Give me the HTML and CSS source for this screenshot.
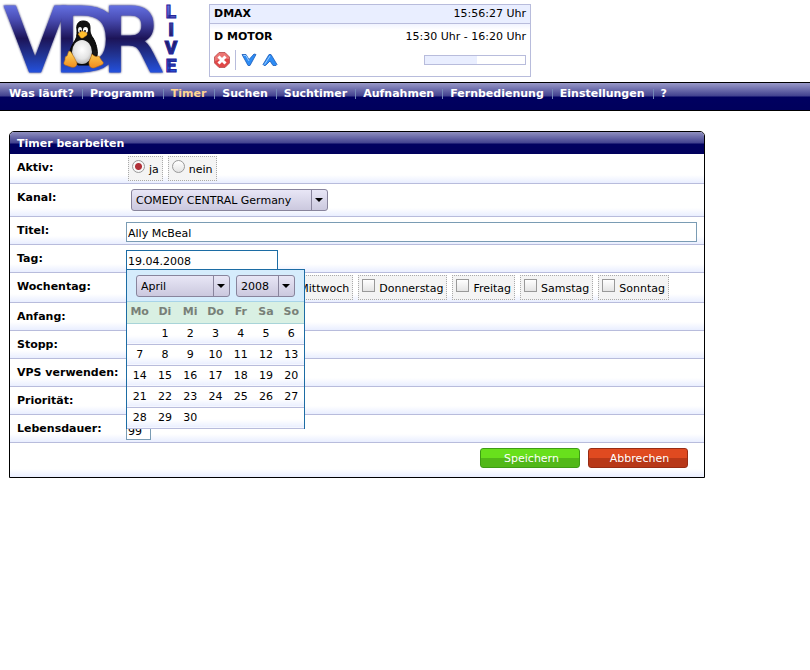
FILE: index.html
```html
<!DOCTYPE html>
<html lang="de">
<head>
<meta charset="utf-8">
<title>VDR Live - Timer bearbeiten</title>
<link rel="stylesheet" href="styles.css">
</head>
<body>
<header class="top">
  <svg class="logo" viewBox="0 0 180 80" role="img" aria-label="VDR Live">
    <defs>
      <linearGradient id="metal" gradientUnits="userSpaceOnUse" x1="0" y1="4" x2="0" y2="73">
        <stop offset="0" stop-color="#6674e6"/>
        <stop offset=".22" stop-color="#4a4db4"/>
        <stop offset=".5" stop-color="#1c1458"/>
        <stop offset=".75" stop-color="#213596"/>
        <stop offset="1" stop-color="#2452e0"/>
      </linearGradient>
      <radialGradient id="belly" cx=".5" cy=".4" r=".65">
        <stop offset="0" stop-color="#fff"/>
        <stop offset=".6" stop-color="#e4e4e4"/>
        <stop offset="1" stop-color="#a8a8a8"/>
      </radialGradient>
      <linearGradient id="foot" x1="0" y1="0" x2="0" y2="1">
        <stop offset="0" stop-color="#ffd85c"/>
        <stop offset="1" stop-color="#f08a1c"/>
      </linearGradient>
    </defs>
    <g class="logo-word">
      <text x="5" y="71">V</text>
      <text x="54" y="71">D</text>
      <text x="102" y="71">R</text>
    </g>
    <g class="logo-live">
      <text x="171" y="18">L</text>
      <text x="171" y="36">I</text>
      <text x="171" y="54">V</text>
      <text x="171" y="72">E</text>
    </g>
    <path fill="#101010" stroke="#000" d="M83 21c-5 0-7 4-6 9 0 5 0 8-3 12-3 5-5 10-5 15l9 8h12l7-9c1-6-1-13-4-18-3-4-3-7-3-10 0-5-2-7-7-7z"/>
    <ellipse cx="82" cy="52" rx="10" ry="12" fill="url(#belly)"/>
    <ellipse cx="80" cy="30" rx="2" ry="3" fill="#eee"/>
    <ellipse cx="85.500" cy="30" rx="2.500" ry="3" fill="#fff"/>
    <circle cx="80.500" cy="31" r="1" fill="#111"/>
    <circle cx="85" cy="31" r="1" fill="#111"/>
    <path fill="#ffbf2c" stroke="#c87a10" stroke-width=".5" d="M78 34l4-3 5 2v2l-4 3h-2z"/>
    <path fill="url(#foot)" stroke="#b86a10" stroke-width=".6" d="M69 51c2 0 3 3 5 6l3 6c0 4-3 5-6 4l-6-2c-2-1-1-3 0-5 0-2 0-4 2-4 1-2 1-4 2-5zM92 54c3 3 5 3 7 2 1 2 2 4 4 6 1 2-1 3-4 4l-5 2c-4 0-5-2-5-6z"/>
    <circle cx="95" cy="52.500" r="2.500" fill="#181818"/>
  </svg>

  <section class="info" aria-label="Aktueller Kanal">
    <div class="info-line info-head"><b>DMAX</b><span>15:56:27 Uhr</span></div>
    <div class="info-line"><b>D MOTOR</b><span>15:30 Uhr - 16:20 Uhr</span></div>
    <div class="info-line info-tools">
      <button class="icon" type="button" aria-label="Stopp">
        <svg viewBox="0 0 16 16"><path fill="#e04848" stroke="#b04444" stroke-width=".7" d="M5 .5h6L15.500 5v6L11 15.500H5L.5 11V5z"/><path fill="#f49a98" opacity=".55" d="M5 1h6l4 4v2Q8 6 1 9V5z"/><path stroke="#fff" stroke-width="3" d="M4.500 4.500l7 7M11.500 4.500l-7 7"/></svg>
      </button>
      <i class="sep"></i>
      <button class="icon" type="button" aria-label="Kanal zurück">
        <svg viewBox="0 0 16 16"><path fill="#2d8cf5" stroke="#1c5cb8" stroke-width=".8" stroke-linejoin="round" d="M1 2.500h4L8 7.500l5-5.500 2 .5L9 13.500H7z"/><path fill="none" stroke="#9ccdff" d="M2.500 3.500H5L8 9"/></svg>
      </button>
      <button class="icon" type="button" aria-label="Kanal vor">
        <svg viewBox="0 0 16 16"><path fill="#2d8cf5" stroke="#1c5cb8" stroke-width=".8" stroke-linejoin="round" d="M1 12.500L7 2.500h2l6 10-1 1h-3L8 9l-4.500 4.500H2z"/><path fill="none" stroke="#9ccdff" d="M2.500 12.500L8 4"/></svg>
      </button>
      <span class="progress"><span class="progress-bar"></span></span>
    </div>
  </section>
</header>

<nav class="menu">
  <a href="#">Was läuft?</a>
  <a href="#">Programm</a>
  <a href="#" class="active">Timer</a>
  <a href="#">Suchen</a>
  <a href="#">Suchtimer</a>
  <a href="#">Aufnahmen</a>
  <a href="#">Fernbedienung</a>
  <a href="#">Einstellungen</a>
  <a href="#">?</a>
</nav>

<form class="timer">
  <h1>Timer bearbeiten</h1>
  <div class="row">
    <span class="label">Aktiv:</span>
    <div class="chips">
      <label class="chip"><input type="radio" name="active" checked><span>ja</span></label>
      <label class="chip"><input type="radio" name="active"><span>nein</span></label>
    </div>
  </div>
  <div class="row">
    <label class="label" for="channel">Kanal:</label>
    <div class="channel"><span class="drop"><select id="channel"><option>COMEDY CENTRAL Germany</option></select></span></div>
  </div>
  <div class="row">
    <label class="label" for="title">Titel:</label>
    <div class="field"><input class="text wide" id="title" type="text" value="Ally McBeal"></div>
  </div>
  <div class="row">
    <label class="label" for="day">Tag:</label>
    <div class="field">
      <input class="text date" id="day" type="text" value="19.04.2008">
      <div class="calendar">
        <div class="calendar-head">
          <span class="drop month"><select aria-label="Monat"><option>April</option></select></span>
          <span class="drop year"><select aria-label="Jahr"><option>2008</option></select></span>
        </div>
        <table>
          <thead><tr><th>Mo</th><th>Di</th><th>Mi</th><th>Do</th><th>Fr</th><th>Sa</th><th>So</th></tr></thead>
          <tbody>
            <tr><td></td><td>1</td><td>2</td><td>3</td><td>4</td><td>5</td><td>6</td></tr>
            <tr><td>7</td><td>8</td><td>9</td><td>10</td><td>11</td><td>12</td><td>13</td></tr>
            <tr><td>14</td><td>15</td><td>16</td><td>17</td><td>18</td><td>19</td><td>20</td></tr>
            <tr><td>21</td><td>22</td><td>23</td><td>24</td><td>25</td><td>26</td><td>27</td></tr>
            <tr><td>28</td><td>29</td><td>30</td><td></td><td></td><td></td><td></td></tr>
          </tbody>
        </table>
      </div>
    </div>
  </div>
  <div class="row">
    <span class="label">Wochentag:</span>
    <div class="chips">
      <label class="chip"><input type="checkbox"><span>Montag</span></label>
      <label class="chip"><input type="checkbox"><span>Dienstag</span></label>
      <label class="chip"><input type="checkbox"><span>Mittwoch</span></label>
      <label class="chip"><input type="checkbox"><span>Donnerstag</span></label>
      <label class="chip"><input type="checkbox"><span>Freitag</span></label>
      <label class="chip"><input type="checkbox"><span>Samstag</span></label>
      <label class="chip"><input type="checkbox"><span>Sonntag</span></label>
    </div>
  </div>
  <div class="row"><span class="label">Anfang:</span></div>
  <div class="row"><span class="label">Stopp:</span></div>
  <div class="row"><span class="label">VPS verwenden:</span></div>
  <div class="row"><span class="label">Priorität:</span></div>
  <div class="row">
    <label class="label" for="lifetime">Lebensdauer:</label>
    <div class="field"><input class="text number" id="lifetime" type="text" value="99"></div>
  </div>
  <div class="actions">
    <button class="save" type="button">Speichern</button>
    <button class="cancel" type="button">Abbrechen</button>
  </div>
</form>
</body>
</html>
```
FILE: styles.css
```css
* { box-sizing: border-box; }

body {
  margin: 0;
  background: #fff;
  color: #000;
}

body, input, select, button {
  font: 11px/14px "DejaVu Sans", Verdana, sans-serif;
}

/* Page head */
.top {
  display: flex;
  align-items: flex-start;
  gap: 29px;
  height: 82px;
}
.logo { width: 180px; height: 80px; overflow: visible; }
.logo-word {
  font: 88px "DejaVu Sans", sans-serif;
  fill: url(#metal);
  stroke: url(#metal);
  stroke-width: 3;
  filter: drop-shadow(0 0 1px #1c1c60);
}
.logo-live {
  font: 900 19px Roboto, sans-serif;
  fill: url(#metal);
  stroke: #26269a;
  stroke-width: 1;
  text-anchor: middle;
}

.info {
  width: 322px;
  margin-top: 4px;
  border: 1px solid #b8bcdc;
}
.info-line {
  display: flex;
  align-items: center;
  justify-content: space-between;
  padding: 6px 4px 0;
}
.info-head {
  padding: 2px 4px;
  border-bottom: 1px solid #b8bcdc;
  background: #e9eeff;
}
.info-head + .info-line { background: linear-gradient(#f0f3ff, #fff 6px); }
.info-tools {
  justify-content: flex-start;
  gap: 5px;
  padding: 6px 4px;
}
.icon {
  width: 16px;
  height: 16px;
  padding: 0;
  border: 0;
  background: none;
}
.icon svg { display: block; width: 16px; height: 16px; }
.sep { width: 1px; height: 20px; background: #b8bcdc; }
.progress {
  width: 102px;
  height: 10px;
  margin-left: auto;
  border: 1px solid #b8bcdc;
}
.progress-bar { display: block; width: 52%; height: 8px; background: #e9eeff; }

/* Main menu */
.menu {
  display: flex;
  height: 29px;
  padding: 4px 1px 0;
  border: solid #000;
  border-width: 1px 0;
  background: linear-gradient(#9999c8, #41418f 13px, #000060 14px, #00005c);
}
.menu a {
  height: 14px;
  padding: 0 8px;
  color: #fff;
  font-weight: bold;
  text-decoration: none;
}
.menu a + a { background: linear-gradient(#7389b8, #7389b8) 0 2px / 1px 10px no-repeat; }
.menu .active { color: #ffd493; }

/* Timer form */
.timer {
  max-width: 696px;
  margin: 20px 9px;
  border: 1px solid #000;
  border-radius: 5px 5px 0 0;
}
h1 {
  margin: 0;
  padding: 5px 7px 3px;
  border-radius: 4px 4px 0 0;
  background: linear-gradient(#9090c0, #41418f 11px, #000060 12px, #00005c);
  color: #fff;
  font-size: 11px;
  line-height: 14px;
}
.row {
  display: grid;
  grid-template-columns: 116px 1fr;
  min-height: 28px;
  padding-right: 7px;
  border-bottom: 1px solid #b8bcdc;
}
.row, .actions, td { background: linear-gradient(to top, #e9eeff, #fff 8px); }
.label { padding: 7px 0 0 7px; font-weight: bold; white-space: nowrap; }
.field { position: relative; padding: 5px 0 2px; }
.channel { padding: 5px; }

.text {
  display: block;
  height: 20px;
  padding: 2px 1px 0;
  border: 1px solid #7a9cb4;
  background: #fff;
}
.wide { width: 100%; }
.date { width: 152px; border-color: #1c6ca4; }
.number { width: 25px; }

.chips { display: flex; gap: 5px; padding: 2px; }
.chip {
  display: flex;
  align-items: flex-start;
  gap: 4px;
  height: 25px;
  padding: 3px;
  border: 1px dotted #aaa;
  background: #f4f4f4;
}
.chip span { padding-top: 3px; }
.chip input {
  appearance: none;
  width: 13px;
  height: 13px;
  margin: 0;
  border: 1px solid #999;
  background: linear-gradient(#fff, #e4e4e4);
}
.chip input[type="radio"] { border-radius: 50%; }
.chip input[type="radio"]:checked { background: radial-gradient(circle, #b03038 3px, #f8f8f8 4px); }

.drop { position: relative; display: block; width: 197px; }
.drop::before {
  content: "";
  position: absolute;
  inset: 1px 16px 1px auto;
  width: 1px;
  background: #88849c;
  pointer-events: none;
}
.drop::after {
  content: "";
  position: absolute;
  top: 9px;
  right: 5px;
  border: solid transparent;
  border-width: 4px 4px 0;
  border-top-color: #000;
  pointer-events: none;
}
select {
  appearance: none;
  display: block;
  width: 100%;
  height: 22px;
  padding: 1px 17px 0 4px;
  border: 1px solid #88849c;
  border-radius: 3px;
  background: linear-gradient(#e8e6f6, #cbc8de);
  color: #000;
}

/* Calendar pop-up */
.calendar {
  position: absolute;
  top: 24px;
  left: 0;
  z-index: 1;
  width: 179px;
  border: 1px solid #1c6ca4;
  border-bottom: 0;
  background: #fff;
}
.calendar-head {
  display: flex;
  gap: 6px;
  padding: 5px 9px 4px;
  border-bottom: 1px solid #a8d4e8;
  background: #d5ecfc;
}
.month { width: 94px; }
.year { width: 59px; }
table { width: 100%; border-collapse: collapse; table-layout: fixed; }
th, td {
  height: 21px;
  padding: 0;
  border-bottom: 1px solid #b8bcdc;
  text-align: center;
}
th { border-color: #a8d4d8; background: #d9f0e3; color: #788078; }

/* Form buttons */
.actions {
  display: flex;
  justify-content: flex-end;
  gap: 8px;
  padding: 5px 16px 9px;
}
.actions button {
  width: 100px;
  height: 20px;
  padding: 2px 0 0 3px;
  border: 1px solid;
  border-radius: 3px;
  color: #fff;
}
.actions .save { border-color: #3e9c14; background: linear-gradient(#68e01c 50%, #52b818 50%); }
.actions .cancel { border-color: #982c14; background: linear-gradient(#e04a20 50%, #b83818 50%); }
```
